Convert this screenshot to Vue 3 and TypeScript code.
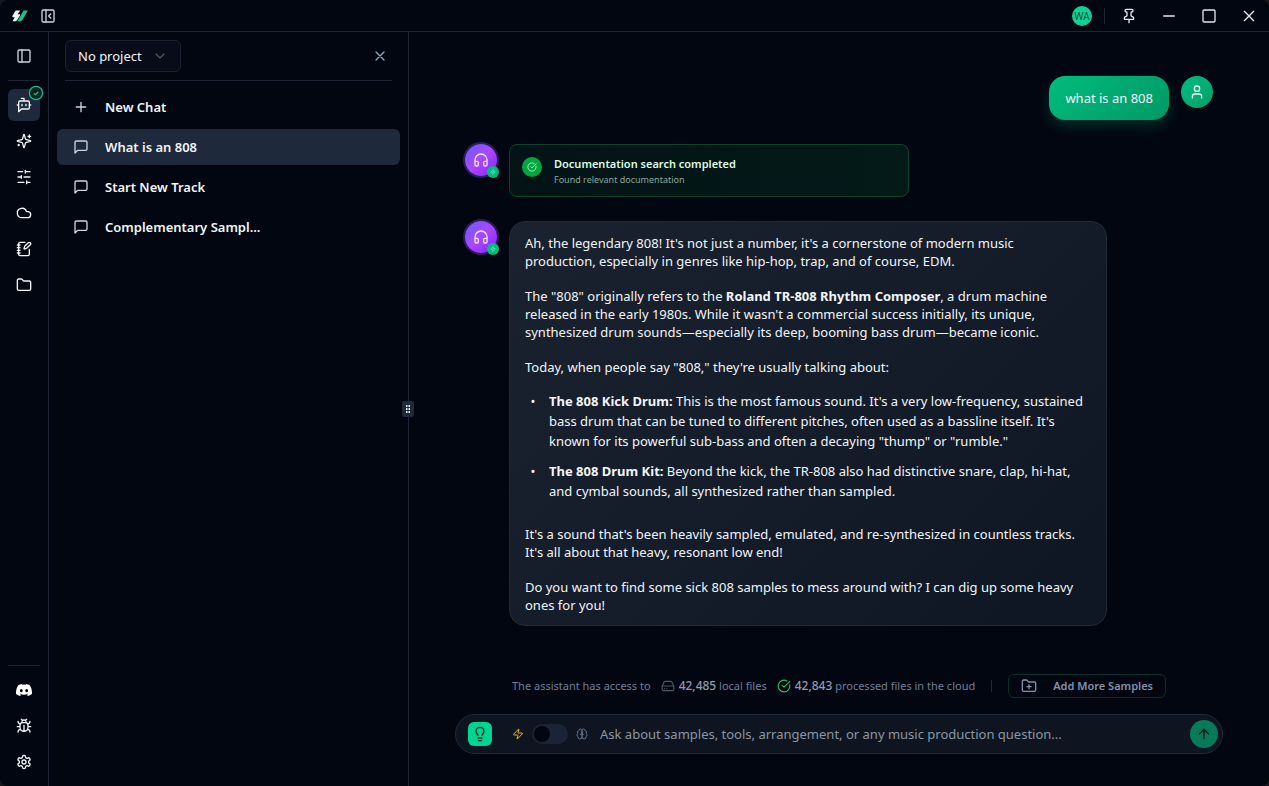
<script setup lang="ts">
import { ref } from 'vue'

interface IconShape {
  paths: string[]
}

const folderPath =
  'M20 20a2 2 0 0 0 2-2V8a2 2 0 0 0-2-2h-7.9a2 2 0 0 1-1.69-.9L9.6 3.9A2 2 0 0 0 7.93 3H4a2 2 0 0 0-2 2v13a2 2 0 0 0 2 2Z'

const icons: Record<string, IconShape> = {
  sparkles: {
    paths: [
      'M9.937 15.5A2 2 0 0 0 8.5 14.063l-6.135-1.582a.5.5 0 0 1 0-.962L8.5 9.936A2 2 0 0 0 9.937 8.5l1.582-6.135a.5.5 0 0 1 .963 0L14.063 8.5A2 2 0 0 0 15.5 9.937l6.135 1.581a.5.5 0 0 1 0 .964L15.5 14.063a2 2 0 0 0-1.437 1.437l-1.582 6.135a.5.5 0 0 1-.963 0z',
      'M20 3v4M22 5h-4M4 17v2M5 18H3',
    ],
  },
  sliders: { paths: ['M21 4h-7M10 4H3M21 12h-9M8 12H3M21 20h-5M12 20H3M14 2v4M8 10v4M16 18v4'] },
  cloud: { paths: ['M17.5 19H9a7 7 0 1 1 6.71-9h1.79a4.5 4.5 0 1 1 0 9Z'] },
  notebook: {
    paths: [
      'M13.4 2H6a2 2 0 0 0-2 2v16a2 2 0 0 0 2 2h12a2 2 0 0 0 2-2v-7.4M2 6h4M2 10h4M2 14h4M2 18h4',
      'M21.378 5.626a1 1 0 1 0-3.004-3.004l-5.01 5.012a2 2 0 0 0-.506.854l-.837 2.87a.5.5 0 0 0 .62.62l2.87-.837a2 2 0 0 0 .854-.506z',
    ],
  },
  folder: { paths: [folderPath] },
}

const tools = [
  { name: 'Generate', icon: 'sparkles' },
  { name: 'Mixer', icon: 'sliders' },
  { name: 'Cloud', icon: 'cloud' },
  { name: 'Notes', icon: 'notebook' },
  { name: 'Files', icon: 'folder' },
]

const chats = ['What is an 808', 'Start New Track', 'Complementary Sampl...']
const activeChat = ref(0)
const deepThinking = ref(false)
const draft = ref('')
</script>

<template>
  <div class="window">
    <header class="titlebar">
      <svg class="logo" viewBox="0 0 16 12" aria-hidden="true">
        <path d="M4.2.5h4L5.6 4.3h2.2q.6.4.2 1.1L5 10.3q-.6 1-1.6 1H.5L2.8 7.2H.8Q0 6.8.4 6L3 1.4Q3.5.5 4.2.5z" fill="#f1f5f9" />
        <path d="M11.6.5h4.2L10.4 10q-.8 1.3-2 1.3H5.3z" fill="#10c78d" />
      </svg>
      <button class="icon-btn collapse" aria-label="Collapse sidebar">
        <svg class="icon" viewBox="0 0 24 24"><rect x="3" y="3" width="18" height="18" rx="2" /><path d="M9 3v18M16 15l-3-3 3-3" /></svg>
      </button>
      <div class="title-actions">
        <button class="account">WA</button>
        <span class="title-divider"></span>
        <button class="win-btn" aria-label="Pin window">
          <svg class="icon" viewBox="0 0 24 24"><path d="M12 17v5M9 10.76a2 2 0 0 1-1.11 1.79l-1.78.9A2 2 0 0 0 5 15.24V16a1 1 0 0 0 1 1h12a1 1 0 0 0 1-1v-.76a2 2 0 0 0-1.11-1.79l-1.78-.9A2 2 0 0 1 15 10.76V7a1 1 0 0 1 1-1 2 2 0 0 0 0-4H8a2 2 0 0 0 0 4 1 1 0 0 1 1 1z" /></svg>
        </button>
        <button class="win-btn" aria-label="Minimize">
          <svg class="icon" viewBox="0 0 24 24"><path d="M4 12h16" /></svg>
        </button>
        <button class="win-btn" aria-label="Maximize">
          <svg class="icon" viewBox="0 0 24 24"><rect x="3" y="3" width="18" height="18" rx="2" /></svg>
        </button>
        <button class="win-btn" aria-label="Close window">
          <svg class="icon" viewBox="0 0 24 24"><path d="M19 5 5 19M5 5l14 14" /></svg>
        </button>
      </div>
    </header>

    <div class="body">
      <nav class="rail" aria-label="Tools">
        <button class="rail-btn" aria-label="Toggle panel">
          <svg class="icon muted" viewBox="0 0 24 24"><rect x="3" y="3" width="18" height="18" rx="2" /><path d="M9 3v18" /></svg>
        </button>
        <span class="rail-divider"></span>
        <button class="rail-btn selected" aria-label="Assistant">
          <svg class="icon" viewBox="0 0 24 24"><path d="M12 6V2H8M8 18l-4 4V8a2 2 0 0 1 2-2h12a2 2 0 0 1 2 2v8a2 2 0 0 1-2 2ZM2 12h2M9 11v2M15 11v2M20 12h2" /></svg>
          <span class="rail-badge">
            <svg viewBox="0 0 16 16"><circle cx="8" cy="8" r="6.6" /><path d="m5.8 8.2 1.6 1.5 2.9-3" /></svg>
          </span>
        </button>
        <button v-for="tool in tools" :key="tool.name" class="rail-btn" :aria-label="tool.name">
          <svg class="icon" viewBox="0 0 24 24">
            <path v-for="d in icons[tool.icon].paths" :key="d" :d="d" />
          </svg>
        </button>
        <span class="spacer"></span>
        <span class="rail-divider"></span>
        <button class="rail-btn" aria-label="Discord">
          <svg class="discord" viewBox="0 0 24 24"><path d="M20.317 4.37a19.79 19.79 0 0 0-4.885-1.515.074.074 0 0 0-.079.037c-.21.375-.444.864-.608 1.25a18.27 18.27 0 0 0-5.487 0 12.64 12.64 0 0 0-.617-1.25.077.077 0 0 0-.079-.037A19.736 19.736 0 0 0 3.677 4.37a.07.07 0 0 0-.032.027C.533 9.046-.32 13.58.099 18.057a.082.082 0 0 0 .031.057 19.9 19.9 0 0 0 5.993 3.03.078.078 0 0 0 .084-.028c.462-.63.874-1.295 1.226-1.994a.076.076 0 0 0-.041-.106 13.107 13.107 0 0 1-1.872-.892.077.077 0 0 1-.008-.128c.126-.094.252-.192.372-.291a.074.074 0 0 1 .077-.01c3.928 1.793 8.18 1.793 12.062 0a.074.074 0 0 1 .078.01c.12.098.246.197.373.291a.077.077 0 0 1-.006.128 12.3 12.3 0 0 1-1.873.891.077.077 0 0 0-.041.107c.36.698.772 1.362 1.225 1.993a.076.076 0 0 0 .084.029 19.84 19.84 0 0 0 6.002-3.03.077.077 0 0 0 .032-.055c.5-5.177-.838-9.674-3.549-13.66a.06.06 0 0 0-.031-.029zM8.02 15.331c-1.183 0-2.157-1.086-2.157-2.419s.955-2.419 2.157-2.419c1.21 0 2.176 1.095 2.157 2.42 0 1.332-.956 2.418-2.157 2.418zm7.975 0c-1.183 0-2.157-1.086-2.157-2.419s.955-2.419 2.157-2.419c1.21 0 2.176 1.095 2.157 2.42 0 1.332-.946 2.418-2.157 2.418z" /></svg>
        </button>
        <button class="rail-btn" aria-label="Report a bug">
          <svg class="icon" viewBox="0 0 24 24"><path d="m8 2 1.88 1.88M14.12 3.88 16 2M9 7.13v-1a3.003 3.003 0 1 1 6 0v1M12 20c-3.3 0-6-2.7-6-6v-3a4 4 0 0 1 4-4h4a4 4 0 0 1 4 4v3c0 3.3-2.7 6-6 6M12 20v-9M6.53 9C4.6 8.8 3 7.1 3 5M6 13H2M3 21c0-2.1 1.7-3.9 3.8-4M20.97 5c0 2.1-1.6 3.8-3.5 4M22 13h-4M17.2 17c2.1.1 3.8 1.9 3.8 4" /></svg>
        </button>
        <button class="rail-btn" aria-label="Settings">
          <svg class="icon" viewBox="0 0 24 24"><path d="M12.22 2h-.44a2 2 0 0 0-2 2v.18a2 2 0 0 1-1 1.73l-.43.25a2 2 0 0 1-2 0l-.15-.08a2 2 0 0 0-2.73.73l-.22.38a2 2 0 0 0 .73 2.73l.15.1a2 2 0 0 1 1 1.72v.51a2 2 0 0 1-1 1.74l-.15.09a2 2 0 0 0-.73 2.73l.22.38a2 2 0 0 0 2.73.73l.15-.08a2 2 0 0 1 2 0l.43.25a2 2 0 0 1 1 1.73V20a2 2 0 0 0 2 2h.44a2 2 0 0 0 2-2v-.18a2 2 0 0 1 1-1.73l.43-.25a2 2 0 0 1 2 0l.15.08a2 2 0 0 0 2.73-.73l.22-.39a2 2 0 0 0-.73-2.73l-.15-.08a2 2 0 0 1-1-1.74v-.5a2 2 0 0 1 1-1.74l.15-.09a2 2 0 0 0 .73-2.73l-.22-.38a2 2 0 0 0-2.73-.73l-.15.08a2 2 0 0 1-2 0l-.43-.25a2 2 0 0 1-1-1.73V4a2 2 0 0 0-2-2z" /><circle cx="12" cy="12" r="3" /></svg>
        </button>
      </nav>

      <aside class="panel">
        <div class="panel-head">
          <button class="project">
            No project
            <svg class="icon" viewBox="0 0 24 24"><path d="m6 9 6 6 6-6" /></svg>
          </button>
          <button class="icon-btn" aria-label="Close panel">
            <svg class="icon" viewBox="0 0 24 24"><path d="M18 6 6 18M6 6l12 12" /></svg>
          </button>
        </div>
        <div class="chats">
          <button class="chat new">
            <svg class="icon" viewBox="0 0 24 24"><path d="M5 12h14M12 5v14" /></svg>
            New Chat
          </button>
          <button
            v-for="(chat, i) in chats"
            :key="chat"
            class="chat"
            :class="{ active: i === activeChat }"
            @click="activeChat = i"
          >
            <svg class="icon" viewBox="0 0 24 24"><path d="M21 15a2 2 0 0 1-2 2H7l-4 4V5a2 2 0 0 1 2-2h14a2 2 0 0 1 2 2z" /></svg>
            {{ chat }}
          </button>
        </div>
        <span class="grip">
          <svg viewBox="0 0 12 16"><path d="M4 4h1.5v2H4zM6.5 4H8v2H6.5zM4 7h1.5v2H4zM6.5 7H8v2H6.5zM4 10h1.5v2H4zM6.5 10H8v2H6.5z" /></svg>
        </span>
      </aside>

      <main class="main">
        <section class="messages">
          <div class="row from-user">
            <div class="user-bubble">what is an 808</div>
            <span class="user-avatar">
              <svg class="icon" viewBox="0 0 24 24"><path d="M19 21v-2a4 4 0 0 0-4-4H9a4 4 0 0 0-4 4v2" /><circle cx="12" cy="7" r="4" /></svg>
            </span>
          </div>

          <div class="row">
            <span class="bot-avatar">
              <svg class="icon" viewBox="0 0 24 24"><path d="M3 14h3a2 2 0 0 1 2 2v3a2 2 0 0 1-2 2H5a2 2 0 0 1-2-2v-7a9 9 0 0 1 18 0v7a2 2 0 0 1-2 2h-1a2 2 0 0 1-2-2v-3a2 2 0 0 1 2-2h3" /></svg>
              <span class="bot-badge"><svg class="icon" viewBox="0 0 24 24"><path d="M4 14a1 1 0 0 1-.78-1.63l9.9-10.2a.5.5 0 0 1 .86.46l-1.92 6.02A1 1 0 0 0 13 10h7a1 1 0 0 1 .78 1.63l-9.9 10.2a.5.5 0 0 1-.86-.46l1.92-6.02A1 1 0 0 0 11 14z" /></svg></span>
            </span>
            <div class="notice">
              <span class="notice-icon">
                <svg class="icon" viewBox="0 0 24 24"><path d="M21.801 10A10 10 0 1 1 17 3.335M9 11l3 3L22 4" /></svg>
              </span>
              <div>
                <div class="notice-title">Documentation search completed</div>
                <div class="notice-text">Found relevant documentation</div>
              </div>
            </div>
          </div>

          <div class="row">
            <span class="bot-avatar">
              <svg class="icon" viewBox="0 0 24 24"><path d="M3 14h3a2 2 0 0 1 2 2v3a2 2 0 0 1-2 2H5a2 2 0 0 1-2-2v-7a9 9 0 0 1 18 0v7a2 2 0 0 1-2 2h-1a2 2 0 0 1-2-2v-3a2 2 0 0 1 2-2h3" /></svg>
              <span class="bot-badge"><svg class="icon" viewBox="0 0 24 24"><path d="M4 14a1 1 0 0 1-.78-1.63l9.9-10.2a.5.5 0 0 1 .86.46l-1.92 6.02A1 1 0 0 0 13 10h7a1 1 0 0 1 .78 1.63l-9.9 10.2a.5.5 0 0 1-.86-.46l1.92-6.02A1 1 0 0 0 11 14z" /></svg></span>
            </span>
            <article class="answer">
              <p>Ah, the legendary 808! It's not just a number, it's a cornerstone of modern music production, especially in genres like hip-hop, trap, and of course, EDM.</p>
              <p>The "808" originally refers to the <strong>Roland TR-808 Rhythm Composer</strong>, a drum machine released in the early 1980s. While it wasn't a commercial success initially, its unique, synthesized drum sounds—especially its deep, booming bass drum—became iconic.</p>
              <p class="lead-in">Today, when people say "808," they're usually talking about:</p>
              <ul>
                <li><strong>The 808 Kick Drum:</strong> This is the most famous sound. It's a very low-frequency, sustained bass drum that can be tuned to different pitches, often used as a bassline itself. It's known for its powerful sub-bass and often a decaying "thump" or "rumble."</li>
                <li><strong>The 808 Drum Kit:</strong> Beyond the kick, the TR-808 also had distinctive snare, clap, hi-hat, and cymbal sounds, all synthesized rather than sampled.</li>
              </ul>
              <p>It's a sound that's been heavily sampled, emulated, and re-synthesized in countless tracks. It's all about that heavy, resonant low end!</p>
              <p>Do you want to find some sick 808 samples to mess around with? I can dig up some heavy ones for you!</p>
            </article>
          </div>
        </section>

        <footer class="composer-area">
          <div class="status">
            <span>The assistant has access to</span>
            <span class="stat">
              <svg class="icon drive" viewBox="0 0 24 24"><path d="M22 12H2M5.45 5.11 2 12v6a2 2 0 0 0 2 2h16a2 2 0 0 0 2-2v-6l-3.45-6.89A2 2 0 0 0 16.76 4H7.24a2 2 0 0 0-1.79 1.11zM6 16h.01M10 16h.01" /></svg>
              <span><b>42,485</b> local files</span>
            </span>
            <span class="stat">
              <svg class="icon check" viewBox="0 0 24 24"><path d="M21.801 10A10 10 0 1 1 17 3.335M9 11l3 3L22 4" /></svg>
              <span><b>42,843</b> processed files in the cloud</span>
            </span>
            <span class="status-divider"></span>
            <button class="add">
              <svg class="icon" viewBox="0 0 24 24"><path :d="folderPath" /><path d="M12 10v6M9 13h6" /></svg>
              Add More Samples
            </button>
          </div>
          <form class="composer" @submit.prevent>
            <button type="button" class="ideas" aria-label="Ideas">
              <svg class="icon" viewBox="0 0 24 24"><path d="M15 14c.2-1 .7-1.7 1.5-2.5 1-.9 1.5-2.2 1.5-3.5A6 6 0 0 0 6 8c0 1 .2 2.2 1.5 3.5.7.7 1.3 1.5 1.5 2.5M9 18h6M10 22h4" /></svg>
            </button>
            <label class="mode">
              <svg class="icon bolt" viewBox="0 0 24 24"><path d="M4 14a1 1 0 0 1-.78-1.63l9.9-10.2a.5.5 0 0 1 .86.46l-1.92 6.02A1 1 0 0 0 13 10h7a1 1 0 0 1 .78 1.63l-9.9 10.2a.5.5 0 0 1-.86-.46l1.92-6.02A1 1 0 0 0 11 14z" /></svg>
              <input v-model="deepThinking" type="checkbox" class="switch" aria-label="Deep thinking" />
              <svg class="icon brain" viewBox="0 0 24 24"><path d="M12 5a3 3 0 1 0-5.997.125 4 4 0 0 0-2.526 5.77 4 4 0 0 0 .556 6.588A4 4 0 1 0 12 18ZM12 5a3 3 0 1 1 5.997.125 4 4 0 0 1 2.526 5.77 4 4 0 0 1-.556 6.588A4 4 0 1 1 12 18ZM15 13a4.5 4.5 0 0 1-3-4 4.5 4.5 0 0 1-3 4" /></svg>
            </label>
            <input
              v-model="draft"
              class="prompt"
              type="text"
              aria-label="Message"
              placeholder="Ask about samples, tools, arrangement, or any music production question..."
            />
            <button type="submit" class="send" aria-label="Send">
              <svg class="icon" viewBox="0 0 24 24"><path d="m5 12 7-7 7 7M12 19V5" /></svg>
            </button>
          </form>
        </footer>
      </main>
    </div>
  </div>
</template>

<style>
body {
  margin: 0;
  background: #15171d;
}
</style>

<style scoped>
.window {
  display: flex;
  flex-direction: column;
  box-sizing: border-box;
  height: 100vh;
  overflow: hidden;
  border-radius: 8px;
  background: #020611;
  color: #f1f5f9;
  font-family: 'Noto Sans', 'Open Sans', sans-serif;
  font-size: 13px;
  line-height: 20px;
}
.window * {
  box-sizing: border-box;
}
button {
  display: flex;
  align-items: center;
  justify-content: center;
  padding: 0;
  border: 0;
  background: none;
  color: inherit;
  font: inherit;
  white-space: nowrap;
}
.icon {
  display: block;
  flex: none;
  width: 16px;
  height: 16px;
  fill: none;
  stroke: currentColor;
  stroke-width: 2;
  stroke-linecap: round;
  stroke-linejoin: round;
}

/* Title bar */
.titlebar {
  display: flex;
  flex: none;
  align-items: center;
  height: 32px;
  padding-left: 12px;
  border-bottom: 1px solid #1e2534;
}
.logo {
  width: 16px;
  height: 12px;
}
.collapse {
  margin-left: 12px;
  color: #cbd5e1;
}
.title-actions {
  display: flex;
  align-items: center;
  margin-left: auto;
}
.account {
  width: 20px;
  height: 20px;
  border-radius: 50%;
  background: #10d296;
  color: #064e3b;
  font-size: 10px;
}
.title-divider {
  width: 1px;
  height: 16px;
  margin: 0 4px 0 12px;
  background: #1e2534;
}
.win-btn {
  width: 40px;
  height: 31px;
  color: #e2e8f0;
}

/* Icon rail */
.body {
  display: flex;
  flex: 1;
  min-height: 0;
}
.rail {
  display: flex;
  flex: none;
  flex-direction: column;
  align-items: center;
  gap: 4px;
  width: 49px;
  padding: 8px 8px;
  border-right: 1px solid #1e2534;
}
.rail-btn {
  position: relative;
  width: 32px;
  height: 32px;
  border-radius: 6px;
}
.rail-btn.selected {
  background: #1e293b;
}
.muted {
  color: #cbd5e1;
}
.rail-divider {
  width: 32px;
  height: 1px;
  margin: 4px 0;
  background: #1e2534;
}
.rail-badge {
  position: absolute;
  top: -4px;
  right: -4px;
  width: 16px;
  height: 16px;
}
.rail-badge svg {
  display: block;
  fill: #06231f;
  stroke: #12b98a;
  stroke-width: 1.3;
}
.spacer {
  flex: 1;
}
.discord {
  width: 16px;
  height: 16px;
  fill: #ffffff;
}

/* Chat list */
.panel {
  position: relative;
  flex: none;
  width: 360px;
  padding: 8px 8px;
  border-right: 1px solid #1e2534;
}
.panel-head {
  display: flex;
  align-items: center;
  justify-content: space-between;
  margin: 0 8px;
  padding: 0 4px 8px 0;
  border-bottom: 1px solid #1e2534;
}
.project {
  gap: 10px;
  height: 32px;
  padding: 0 12px;
  border: 1px solid #1a2333;
  border-radius: 6px;
  background: #070c18;
}
.project .icon {
  color: #4b5668;
}
.panel-head .icon-btn {
  color: #94a3b8;
}
.chats {
  display: flex;
  flex-direction: column;
  gap: 4px;
  padding-top: 8px;
}
.chat {
  justify-content: flex-start;
  gap: 16px;
  height: 36px;
  padding: 0 16px;
  border-radius: 6px;
  font-weight: 600;
}
.chat .icon {
  color: #cbd5e1;
}
.chat.active {
  background: #1e293b;
}
.grip {
  position: absolute;
  top: 50%;
  right: -6px;
  width: 12px;
  height: 16px;
  margin-top: -8px;
  border-radius: 2px;
  background: #1e293b;
}
.grip svg {
  display: block;
  fill: #e2e8f0;
}

/* Conversation */
.main {
  display: flex;
  flex: 1;
  flex-direction: column;
  align-items: center;
  min-width: 0;
  padding: 0 16px;
}
.messages {
  display: flex;
  flex: 1;
  flex-direction: column;
  gap: 24px;
  width: 100%;
  max-width: 768px;
  min-height: 0;
  padding: 44px 10px 0;
}
.row {
  display: flex;
  align-items: flex-start;
  gap: 12px;
}
.from-user {
  justify-content: flex-end;
}
.user-bubble {
  padding: 12px 16px;
  border-radius: 16px;
  background: linear-gradient(135deg, #00bc7d, #009966);
  box-shadow: 0 6px 14px rgba(0, 188, 125, 0.22);
}
.user-avatar,
.bot-avatar {
  display: flex;
  flex: none;
  align-items: center;
  justify-content: center;
  width: 32px;
  height: 32px;
  border-radius: 50%;
}
.user-avatar {
  background: linear-gradient(135deg, #00bc7d, #00a06c);
}
.bot-avatar {
  position: relative;
  background: linear-gradient(135deg, #615fff, #ad46ff 50%, #7f22fe);
  box-shadow: 0 0 0 2px rgba(142, 81, 255, 0.3);
}
.bot-avatar > .icon {
  color: #f3e8ff;
}
.bot-badge {
  position: absolute;
  right: -2px;
  bottom: -2px;
  display: flex;
  align-items: center;
  justify-content: center;
  width: 12px;
  height: 12px;
  border-radius: 50%;
  background: #00bc7d;
}
.bot-badge .icon {
  width: 6px;
  height: 6px;
  color: #a7f3d0;
}
.notice {
  display: flex;
  align-items: flex-start;
  gap: 12px;
  width: 400px;
  max-width: 80%;
  padding: 10px 12px 9px;
  border: 1px solid #0b4529;
  border-radius: 8px;
  background: linear-gradient(90deg, #031316, #031a17);
}
.notice-icon {
  display: flex;
  align-items: center;
  justify-content: center;
  width: 20px;
  height: 20px;
  margin-top: 2px;
  border-radius: 50%;
  background: #00a63e;
}
.notice-icon .icon {
  width: 10px;
  height: 10px;
  color: #c8f5d6;
}
.notice-title {
  color: #dcfce7;
  font-size: 11px;
  font-weight: 600;
  line-height: 18px;
}
.notice-text {
  color: #8ba5a0;
  font-size: 9px;
  line-height: 14px;
}
.answer {
  max-width: 80%;
  padding: 12px 20px 11px 15px;
  border: 1px solid #202b38;
  border-radius: 16px;
  background: linear-gradient(135deg, #1a2230, #0f1623);
  line-height: 18px;
}
.answer p {
  margin: 0 0 17px;
}
.answer p:last-child {
  margin-bottom: 0;
}
.answer .lead-in {
  margin-bottom: 15px;
}
.answer strong {
  font-weight: 700;
}
.answer ul {
  margin: 0 0 24px;
  padding-left: 24px;
  list-style-type: '•\00a0\00a0\00a0\00a0';
  line-height: 20px;
}
.answer li + li {
  margin-top: 10px;
}

/* Composer */
.composer-area {
  flex: none;
  width: 100%;
  max-width: 768px;
  padding-bottom: 32px;
}
.status {
  display: flex;
  align-items: center;
  justify-content: center;
  gap: 10px;
  color: #6f7f97;
  font-size: 11px;
  white-space: nowrap;
}
.stat {
  display: flex;
  align-items: center;
  gap: 4px;
}
.stat b {
  color: #8d9bb1;
  font-size: 12px;
  font-weight: 500;
}
.stat .icon {
  width: 14px;
  height: 14px;
}
.stat .drive {
  color: #4b5563;
}
.stat .check {
  color: #22c55e;
}
.status-divider {
  width: 1px;
  height: 12px;
  margin: 0 6px;
  background: #1e293b;
}
.add {
  gap: 16px;
  height: 24px;
  padding: 0 12px;
  border: 1px solid #06302b;
  border-radius: 6px;
  color: #8291a8;
  font-weight: 600;
}
.composer {
  display: flex;
  align-items: center;
  height: 40px;
  margin-top: 16px;
  padding: 0 4px 0 12px;
  border: 1px solid #1e2939;
  border-radius: 20px;
  background: #0e1520;
}
.ideas {
  flex: none;
  width: 24px;
  height: 24px;
  border-radius: 6px;
  background: #00d492;
  color: #022c22;
}
.mode {
  display: flex;
  flex: none;
  align-items: center;
  gap: 8px;
  margin: 0 12px 0 20px;
}
.mode .icon {
  width: 12px;
  height: 12px;
}
.mode .bolt {
  color: #f5b90a;
}
.mode .brain {
  color: #64748b;
}
.switch {
  display: flex;
  align-items: center;
  width: 36px;
  height: 20px;
  margin: 0;
  padding: 2px;
  border-radius: 10px;
  background: #1a2436;
  appearance: none;
}
.switch::before {
  width: 16px;
  height: 16px;
  border-radius: 50%;
  background: #020611;
  content: '';
}
.switch:checked {
  justify-content: flex-end;
}
.prompt {
  flex: 1;
  min-width: 0;
  padding: 0;
  border: 0;
  outline: 0;
  background: none;
  color: #f1f5f9;
  font: inherit;
}
.prompt::placeholder {
  color: #8b95a5;
  opacity: 1;
}
.send {
  flex: none;
  width: 28px;
  height: 28px;
  border-radius: 50%;
  background: #077a59;
  color: #02150f;
}
</style>
